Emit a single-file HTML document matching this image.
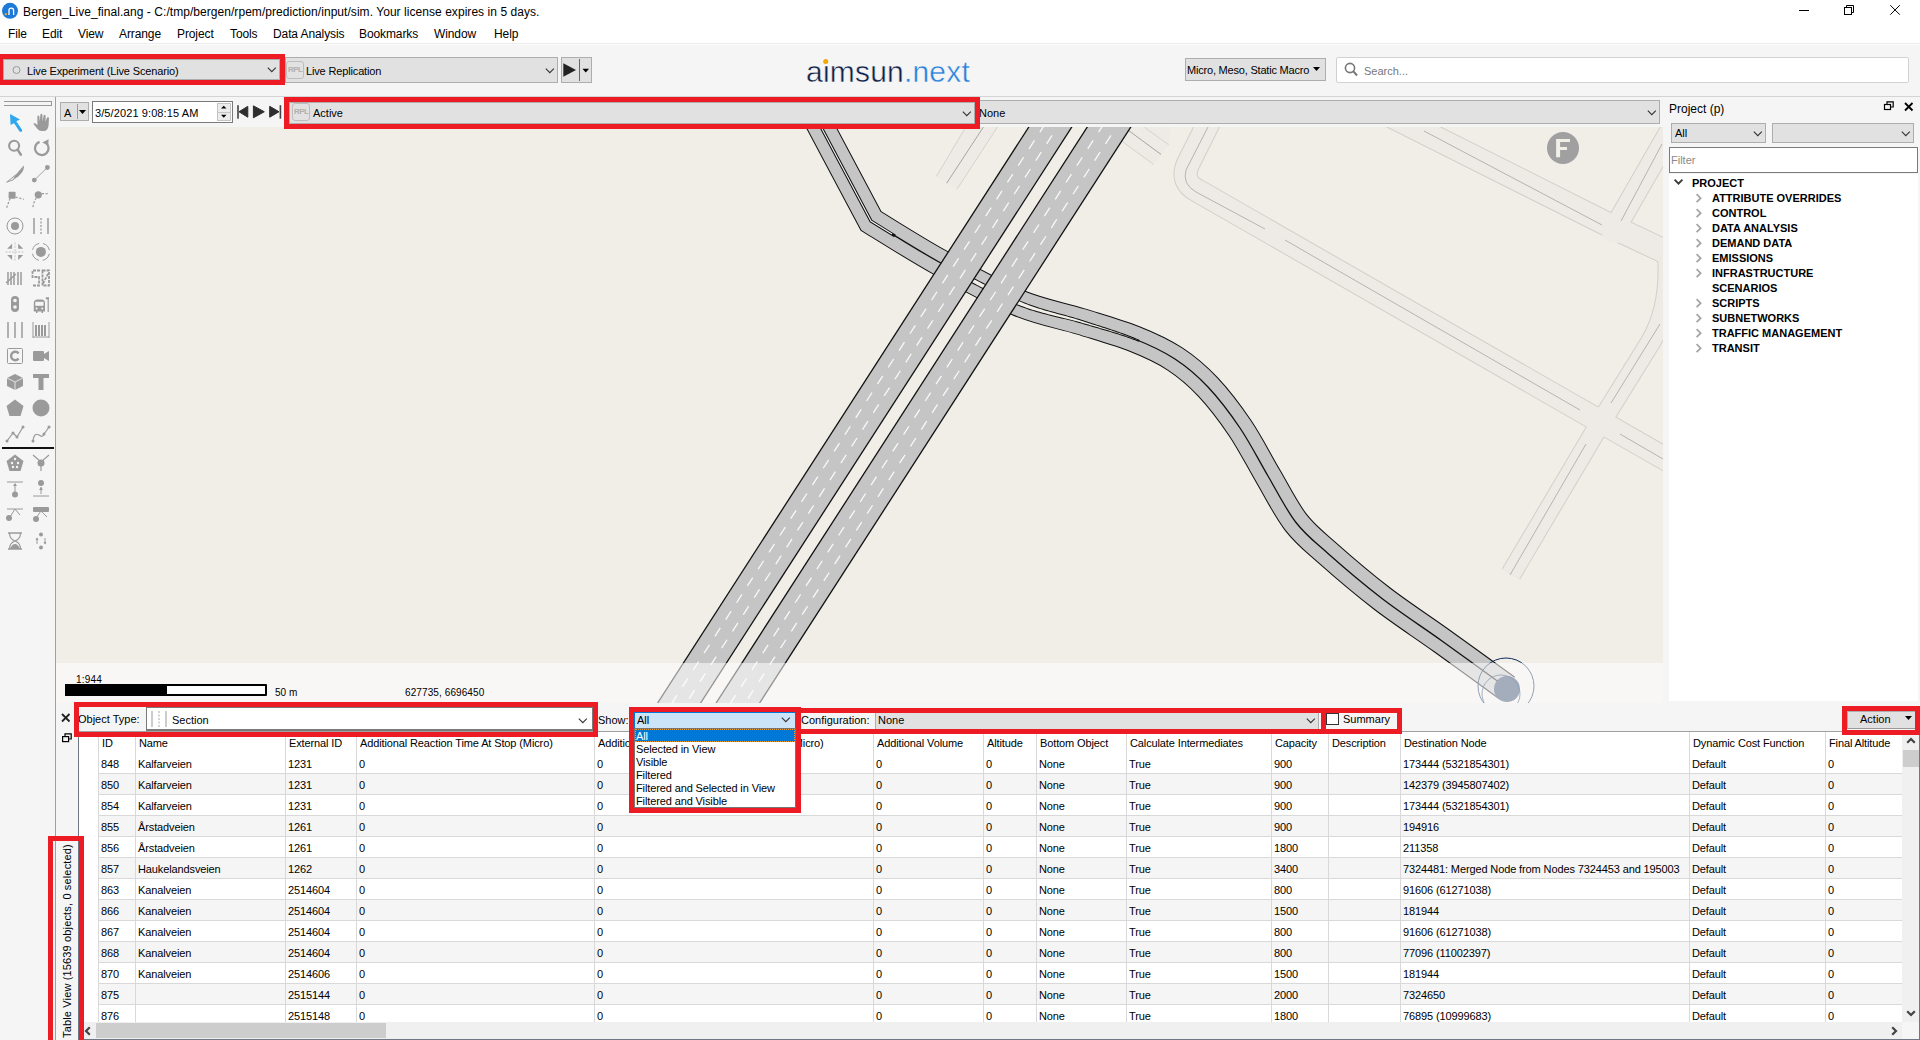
<!DOCTYPE html><html><head><meta charset="utf-8"><style>
html,body{margin:0;padding:0;width:1920px;height:1040px;overflow:hidden;background:#f5f5f5;font-family:"Liberation Sans",sans-serif;}
.t{position:absolute;white-space:nowrap;}
svg{overflow:visible}
</style></head><body>

<div style="position:absolute;left:0px;top:0px;width:1920px;height:43px;background:#ffffff;"></div>
<div style="position:absolute;left:0px;top:43px;width:1920px;height:1px;background:#ececec;"></div>
<svg style="position:absolute;left:1px;top:2px" width="18" height="18" viewBox="0 0 18 18"><circle cx="9" cy="8.8" r="8" fill="#1d7ad6"/><path d="M8,13 V8.2 Q8,6.2 10.2,6.2 Q12.6,6.2 12.6,8.4 V13" fill="none" stroke="#fff" stroke-width="1.3"/><rect x="3.8" y="11.2" width="2" height="1.9" fill="#f5b021"/></svg>
<div class="t" style="left:23px;top:5px;font-size:12px;line-height:14px;color:#000;letter-spacing:0.05px">Bergen_Live_final.ang - C:/tmp/bergen/rpem/prediction/input/sim. Your license expires in 5 days.</div>
<div style="position:absolute;left:1799px;top:10px;width:10px;height:1px;background:#000;"></div>
<svg style="position:absolute;left:1840px;top:0px" width="20" height="20" viewBox="1840 0 20 20"><rect x="1844.5" y="7.5" width="7" height="7" fill="none" stroke="#000" stroke-width="1"/><path d="M1846.5 7.5 V5.5 H1853.5 V12.5 H1851.5" fill="none" stroke="#000" stroke-width="1"/></svg>
<svg style="position:absolute;left:1880px;top:0px" width="30" height="20" viewBox="1880 0 30 20"><path d="M1890.3 5.2 L1899.8 14.7 M1899.8 5.2 L1890.3 14.7" stroke="#000" stroke-width="1"/></svg>
<div class="t" style="left:8px;top:27px;font-size:12px;line-height:14px;color:#000;letter-spacing:-0.1px">File</div>
<div class="t" style="left:42px;top:27px;font-size:12px;line-height:14px;color:#000;letter-spacing:-0.1px">Edit</div>
<div class="t" style="left:78px;top:27px;font-size:12px;line-height:14px;color:#000;letter-spacing:-0.1px">View</div>
<div class="t" style="left:119px;top:27px;font-size:12px;line-height:14px;color:#000;letter-spacing:-0.1px">Arrange</div>
<div class="t" style="left:177px;top:27px;font-size:12px;line-height:14px;color:#000;letter-spacing:-0.1px">Project</div>
<div class="t" style="left:230px;top:27px;font-size:12px;line-height:14px;color:#000;letter-spacing:-0.1px">Tools</div>
<div class="t" style="left:273px;top:27px;font-size:12px;line-height:14px;color:#000;letter-spacing:-0.1px">Data Analysis</div>
<div class="t" style="left:359px;top:27px;font-size:12px;line-height:14px;color:#000;letter-spacing:-0.1px">Bookmarks</div>
<div class="t" style="left:434px;top:27px;font-size:12px;line-height:14px;color:#000;letter-spacing:-0.1px">Window</div>
<div class="t" style="left:494px;top:27px;font-size:12px;line-height:14px;color:#000;letter-spacing:-0.1px">Help</div>
<div style="position:absolute;left:0px;top:44px;width:1920px;height:52px;background:#f5f5f5;"></div>
<div style="position:absolute;left:0px;top:44px;width:1920px;height:1px;background:#fcfcfc;"></div>
<div style="position:absolute;left:0px;top:96px;width:1920px;height:1px;background:#d4d4d4;"></div>
<div style="position:absolute;left:3px;top:59px;width:275px;height:19px;background:#e1e1e1;border:1px solid #adadad;"></div><svg style="position:absolute;left:267px;top:67px" width="10" height="6" viewBox="0 0 10 6"><path d="M0.8 0.6 L4.8 4.6 L8.8 0.6" fill="none" stroke="#333" stroke-width="1.1"/></svg>
<svg style="position:absolute;left:12px;top:65px" width="10" height="10"><circle cx="4.5" cy="5" r="3.5" fill="none" stroke="#999" stroke-width="1"/></svg>
<div class="t" style="left:27px;top:64px;font-size:11px;line-height:14px;color:#000;letter-spacing:-0.14px">Live Experiment (Live Scenario)</div>
<div style="position:absolute;left:-2px;top:54px;width:277px;height:21px;border:5px solid #ed1c24;z-index:50;"></div>
<div style="position:absolute;left:285px;top:57px;width:271px;height:24px;background:#e1e1e1;border:1px solid #adadad;"></div><svg style="position:absolute;left:545px;top:68px" width="10" height="6" viewBox="0 0 10 6"><path d="M0.8 0.6 L4.8 4.6 L8.8 0.6" fill="none" stroke="#333" stroke-width="1.1"/></svg>
<div style="position:absolute;left:286px;top:61px;width:18px;height:18px;border:1px solid #bdbdbd;border-radius:3px;background:#e2e2e2;box-sizing:border-box;"></div>
<div class="t" style="left:288px;top:65px;font-size:8px;line-height:10px;color:#b0b0b0;font-weight:bold;letter-spacing:-0.5px">RPL</div>
<div class="t" style="left:306px;top:64px;font-size:11px;line-height:14px;color:#000;letter-spacing:-0.15px">Live Replication</div>
<div style="position:absolute;left:561px;top:57px;width:29px;height:24px;background:#e1e1e1;border:1px solid #adadad;"></div>
<svg style="position:absolute;left:560px;top:56px" width="32" height="28" viewBox="560 56 32 28"><path d="M563.3 63.2 L576 70 L563.3 76.8 Z" fill="#222"/><rect x="579" y="59" width="1" height="22" fill="#666"/><path d="M582.5 68.8 L589 68.8 L585.75 72.5 Z" fill="#000"/></svg>
<div class="t" style="left:806px;top:54px;font-size:30px;line-height:36px;color:#0f2148;letter-spacing:0.2px;-webkit-text-stroke:0.45px #f5f5f5">aimsun<span style="color:#2680dc">.next</span></div>
<svg style="position:absolute;left:823px;top:59px" width="6" height="6"><circle cx="2.7" cy="2.6" r="2.5" fill="#f5a800"/></svg>
<div style="position:absolute;left:1185px;top:58px;width:141px;height:23px;background:#e1e1e1;border:1px solid #adadad;box-sizing:border-box;"></div>
<div class="t" style="left:1187px;top:63px;font-size:11px;line-height:14px;color:#000;letter-spacing:-0.2px">Micro, Meso, Static Macro</div>
<svg style="position:absolute;left:1313px;top:67px" width="8" height="5"><path d="M0 0 L7 0 L3.5 4 Z" fill="#000"/></svg>
<div style="position:absolute;left:1336px;top:57px;width:573px;height:26px;background:#fff;border:1px solid #d2d2d2;border-radius:2px;box-sizing:border-box;"></div>
<svg style="position:absolute;left:1344px;top:62px" width="16" height="16"><circle cx="6" cy="6" r="4.6" fill="none" stroke="#777" stroke-width="1.6"/><path d="M9.2 9.2 L13 13.5" stroke="#777" stroke-width="2"/></svg>
<div class="t" style="left:1364px;top:64px;font-size:11px;line-height:14px;color:#777;">Search...</div>
<div style="position:absolute;left:56px;top:97px;width:1608px;height:30px;background:#f5f5f5;"></div>
<div style="position:absolute;left:60px;top:102px;width:29px;height:19px;background:#e1e1e1;border:1px solid #adadad;box-sizing:border-box;"></div>
<div class="t" style="left:64px;top:106px;font-size:11px;line-height:14px;color:#000;">A</div>
<div style="position:absolute;left:77px;top:104px;width:1px;height:15px;background:#999;"></div>
<svg style="position:absolute;left:79px;top:110px" width="8" height="5"><path d="M0 0 L7 0 L3.5 4 Z" fill="#000"/></svg>
<div style="position:absolute;left:92px;top:101px;width:141px;height:22px;background:#fff;border:1px solid #7a7a7a;box-sizing:border-box;"></div>
<div class="t" style="left:95px;top:106px;font-size:11px;line-height:14px;color:#000;letter-spacing:0.1px">3/5/2021 9:08:15 AM</div>
<div style="position:absolute;left:217px;top:103px;width:14px;height:10px;background:#ececec;border:1px solid #c4c4c4;box-sizing:border-box;"></div>
<div style="position:absolute;left:217px;top:112px;width:14px;height:9px;background:#ececec;border:1px solid #c4c4c4;box-sizing:border-box;"></div>
<svg style="position:absolute;left:210px;top:98px" width="30" height="30" viewBox="210 98 30 30"><path d="M221 108.6 L223.75 105.8 L226.5 108.6 Z" fill="#000"/><path d="M221 114.8 L226.5 114.8 L223.75 117.8 Z" fill="#000"/></svg>
<svg style="position:absolute;left:230px;top:98px" width="60" height="30" viewBox="230 98 60 30"><g fill="#2e2e2e" stroke="#2e2e2e" stroke-width="1" stroke-linejoin="round"><rect x="237.2" y="105.2" width="1.6" height="13.5" stroke="none" fill="#444"/><path d="M239 111.75 L247.8 106.3 L247.8 117.2 Z"/><path d="M253.4 105.8 L264.3 111.75 L253.4 117.8 Z"/><path d="M269.7 106.3 L279 111.75 L269.7 117.2 Z"/></g><rect x="279.6" y="105.2" width="1.6" height="13.5" fill="#444"/></svg>
<div style="position:absolute;left:289px;top:102px;width:684px;height:20px;background:#e1e1e1;border:1px solid #adadad;"></div><svg style="position:absolute;left:962px;top:111px" width="10" height="6" viewBox="0 0 10 6"><path d="M0.8 0.6 L4.8 4.6 L8.8 0.6" fill="none" stroke="#333" stroke-width="1.1"/></svg>
<div style="position:absolute;left:292px;top:103px;width:18px;height:18px;border:1px solid #bdbdbd;border-radius:3px;background:#e2e2e2;box-sizing:border-box;"></div>
<div class="t" style="left:294px;top:107px;font-size:8px;line-height:10px;color:#b0b0b0;font-weight:bold;letter-spacing:-0.5px">RPL</div>
<div class="t" style="left:313px;top:106px;font-size:11px;line-height:14px;color:#000;">Active</div>
<div style="position:absolute;left:284px;top:97px;width:686px;height:22px;border:5px solid #ed1c24;z-index:50;"></div>
<div style="position:absolute;left:976px;top:100px;width:682px;height:22px;background:#e1e1e1;border:1px solid #adadad;"></div><svg style="position:absolute;left:1647px;top:110px" width="10" height="6" viewBox="0 0 10 6"><path d="M0.8 0.6 L4.8 4.6 L8.8 0.6" fill="none" stroke="#333" stroke-width="1.1"/></svg>
<div class="t" style="left:979px;top:106px;font-size:11px;line-height:14px;color:#000;">None</div>
<div style="position:absolute;left:0px;top:97px;width:55px;height:943px;background:#f5f5f5;"></div>
<div style="position:absolute;left:55px;top:97px;width:1px;height:943px;background:#a0a0a0;"></div>
<div style="position:absolute;left:4px;top:101px;width:48px;height:1px;background:#999;"></div>
<div style="position:absolute;left:4px;top:105px;width:48px;height:1px;background:#999;"></div>
<div style="position:absolute;left:51px;top:101px;width:1px;height:5px;background:#999;"></div>
<div style="position:absolute;left:2px;top:447px;width:52px;height:2px;background:#111;"></div>
<svg style="position:absolute;left:5px;top:113px" width="20" height="20" viewBox="0 0 20 20"><path d="M5,1 L15,6.5 L11.2,8.3 L16.8,16.8 L14.6,18.4 L9.2,10 L5.6,12 Z" fill="#2fa8f0"/><path d="M9.5,8.5 L15.8,17.6" stroke="#2fa8f0" stroke-width="2.6" stroke-linecap="round"/></svg>
<svg style="position:absolute;left:31px;top:112px" width="20" height="20" viewBox="0 0 20 20"><path d="M2.3,11.8 Q3.2,10.6 4.6,11.6 L6.4,13.2 L6.4,4.2 Q7.3,2.8 8.3,4.2 L8.8,9.4 L9.4,2.6 Q10.4,1 11.4,2.6 L11.6,9.2 L12.7,3.2 Q13.7,2 14.6,3.4 L14.5,9.6 L16.1,5.6 Q17.2,4.6 18,5.8 L17.6,13.5 Q16.8,19 12.6,19 L10.5,19 Q8,19 6.5,17 Z" fill="#9a9a9a"/></svg>
<svg style="position:absolute;left:5px;top:138px" width="20" height="20" viewBox="0 0 20 20"><circle cx="9.1" cy="7.8" r="5" fill="none" stroke="#9a9a9a" stroke-width="2.1"/><path d="M12.6,11.6 L15.8,16.6" stroke="#9a9a9a" stroke-width="2.6" stroke-linecap="round"/></svg>
<svg style="position:absolute;left:31px;top:138px" width="20" height="20" viewBox="0 0 20 20"><path d="M14.6,4.6 A6.8,6.8 0 1 1 8.6,3.8" fill="none" stroke="#9a9a9a" stroke-width="2.3"/><path d="M17.6,1.2 L17.2,7.6 L11.2,4.6 Z" fill="#9a9a9a"/></svg>
<svg style="position:absolute;left:5px;top:164px" width="20" height="20" viewBox="0 0 20 20"><path d="M18.7,1.5 Q20,6.5 13.5,12.3 L8.5,15.8 L10.5,11 Z" fill="#9a9a9a"/><path d="M10.5,11 L1.6,18.2 L8.5,15.8 Z" fill="#e6e6e6" stroke="#9a9a9a" stroke-width="0.9"/></svg>
<svg style="position:absolute;left:31px;top:164px" width="20" height="20" viewBox="0 0 20 20"><circle cx="3.3" cy="16.1" r="2.4" fill="#9a9a9a"/><circle cx="16.4" cy="3.5" r="2.4" fill="#9a9a9a"/><path d="M3.3,16.1 L16.4,3.5" stroke="#9a9a9a" stroke-width="0.9"/></svg>
<svg style="position:absolute;left:5px;top:190px" width="20" height="20" viewBox="0 0 20 20"><rect x="3.6" y="1.7" width="7" height="7" rx="1" fill="#9a9a9a"/><path d="M10.6,7 L18.7,9.3 M5,8.5 L1.6,17.9" stroke="#9a9a9a" stroke-width="1.2" stroke-dasharray="2.2 1.6"/></svg>
<svg style="position:absolute;left:31px;top:190px" width="20" height="20" viewBox="0 0 20 20"><circle cx="7.3" cy="4.8" r="3.6" fill="#9a9a9a"/><path d="M10.8,3.6 L18.4,3.8 M5.3,8 Q2.5,12 1.8,17.9" fill="none" stroke="#9a9a9a" stroke-width="1.2" stroke-dasharray="2.2 1.6"/></svg>
<svg style="position:absolute;left:5px;top:216px" width="20" height="20" viewBox="0 0 20 20"><circle cx="10" cy="10" r="8" fill="none" stroke="#9a9a9a" stroke-width="1"/><circle cx="10" cy="10" r="4" fill="#9a9a9a"/></svg>
<svg style="position:absolute;left:31px;top:216px" width="20" height="20" viewBox="0 0 20 20"><path d="M3 2 V18 M17 2 V18" stroke="#9a9a9a" stroke-width="1.5"/><path d="M10 2 V18" stroke="#9a9a9a" stroke-width="1.3" stroke-dasharray="2 1.5"/></svg>
<svg style="position:absolute;left:5px;top:242px" width="20" height="20" viewBox="0 0 20 20"><path d="M7.1,1.8 V6.8 H2.1 Z M13.2,1.8 L18.2,6.8 H13.2 Z M2.1,12.9 H7.1 V17.9 Z M13.2,12.9 H18.2 L13.2,17.9 Z" fill="#9a9a9a"/><path d="M10,0.5 V19.5 M0.5,10 H19.5" stroke="#d4d4d4" stroke-width="1.4" stroke-dasharray="2 1.2"/></svg>
<svg style="position:absolute;left:31px;top:242px" width="20" height="20" viewBox="0 0 20 20"><circle cx="9.9" cy="9.9" r="5" fill="#9a9a9a"/><circle cx="9.9" cy="9.9" r="8.6" fill="none" stroke="#9a9a9a" stroke-width="1" stroke-dasharray="9.5 4" stroke-dashoffset="-2"/></svg>
<svg style="position:absolute;left:5px;top:268px" width="20" height="20" viewBox="0 0 20 20"><path d="M3 4 V17 M6 4 V17 M9 4 V17 M13 4 V17 M16 4 V17" stroke="#9a9a9a" stroke-width="1.5"/><path d="M1 15 L11 6" stroke="#9a9a9a" stroke-width="1.3"/></svg>
<svg style="position:absolute;left:31px;top:268px" width="20" height="20" viewBox="0 0 20 20"><path d="M9,2.5 H1.5 V9 H8 V17.5 H1.5 M11.5,2.5 H18 V17.5 H11.5 Z M12,15.5 L17.5,5" fill="none" stroke="#9a9a9a" stroke-width="1.8" stroke-dasharray="3 1"/></svg>
<svg style="position:absolute;left:5px;top:294px" width="20" height="20" viewBox="0 0 20 20"><rect x="6" y="2" width="8" height="16" rx="4" fill="#9a9a9a"/><circle cx="10" cy="6.5" r="1.8" fill="#f5f5f5"/><circle cx="10" cy="13" r="1.8" fill="#f5f5f5"/></svg>
<svg style="position:absolute;left:31px;top:294px" width="20" height="20" viewBox="0 0 20 20"><path d="M2.8,9.2 Q2.8,5.5 6.5,5.5 H10.5 Q14,5.5 14,9.2 V17.5 H12 V19 H10.5 V17.5 H6.5 V19 H5 V17.5 H2.8 Z" fill="#9a9a9a"/><rect x="4.3" y="7.8" width="8.2" height="4" fill="#f5f5f5"/><circle cx="5.6" cy="14.6" r="1" fill="#f5f5f5"/><circle cx="11.2" cy="14.6" r="1" fill="#f5f5f5"/><rect x="14.8" y="3.3" width="2.8" height="2" fill="#9a9a9a"/><rect x="16.6" y="3.3" width="1.2" height="14.8" fill="#9a9a9a"/></svg>
<svg style="position:absolute;left:5px;top:320px" width="20" height="20" viewBox="0 0 20 20"><path d="M3 2 V18 M10 2 V18 M17 2 V18" stroke="#9a9a9a" stroke-width="1.5"/></svg>
<svg style="position:absolute;left:31px;top:320px" width="20" height="20" viewBox="0 0 20 20"><path d="M2 2 V18 M18 2 V18" stroke="#9a9a9a" stroke-width="1"/><path d="M5 5 V16 M8 5 V16 M11 5 V16 M14 5 V16" stroke="#9a9a9a" stroke-width="2"/><path d="M2 17 H18" stroke="#9a9a9a" stroke-width="1"/></svg>
<svg style="position:absolute;left:5px;top:346px" width="20" height="20" viewBox="0 0 20 20"><rect x="2.5" y="2.5" width="15" height="15" rx="1" fill="none" stroke="#9a9a9a" stroke-width="1"/><path d="M13.6,7.4 A4.2,4.2 0 1 0 13.6,12.6" fill="none" stroke="#9a9a9a" stroke-width="2.4"/></svg>
<svg style="position:absolute;left:31px;top:346px" width="20" height="20" viewBox="0 0 20 20"><rect x="2" y="5" width="11" height="10" rx="1" fill="#9a9a9a"/><path d="M13 8 L18 5 V15 L13 12 Z" fill="#9a9a9a"/></svg>
<svg style="position:absolute;left:5px;top:372px" width="20" height="20" viewBox="0 0 20 20"><path d="M10 2 L18 6 V14 L10 18 L2 14 V6 Z" fill="#9a9a9a"/><path d="M2 6 L10 10 L18 6 M10 10 V18" stroke="#f5f5f5" stroke-width="0.8" fill="none"/></svg>
<svg style="position:absolute;left:31px;top:372px" width="20" height="20" viewBox="0 0 20 20"><path d="M2 2 H18 V6 H12.5 V18 H7.5 V6 H2 Z" fill="#9a9a9a"/></svg>
<svg style="position:absolute;left:5px;top:398px" width="20" height="20" viewBox="0 0 20 20"><path d="M10 1.5 L18.5 8 L15.5 18 H4.5 L1.5 8 Z" fill="#9a9a9a"/></svg>
<svg style="position:absolute;left:31px;top:398px" width="20" height="20" viewBox="0 0 20 20"><circle cx="10" cy="10" r="8.5" fill="#9a9a9a"/></svg>
<svg style="position:absolute;left:5px;top:424px" width="20" height="20" viewBox="0 0 20 20"><path d="M2 17 L8 9 L12 13 L18 3" fill="none" stroke="#9a9a9a" stroke-width="1.2"/><circle cx="2" cy="17" r="1.5" fill="#9a9a9a"/><circle cx="8" cy="9" r="1.5" fill="#9a9a9a"/><circle cx="12" cy="13" r="1.5" fill="#9a9a9a"/><circle cx="18" cy="3" r="1.5" fill="#9a9a9a"/></svg>
<svg style="position:absolute;left:31px;top:424px" width="20" height="20" viewBox="0 0 20 20"><path d="M2 17 Q3 8 8 11 Q12 14 13 10 Q16 6 18 3" fill="none" stroke="#9a9a9a" stroke-width="1.2"/><circle cx="2" cy="17" r="1.5" fill="#9a9a9a"/><circle cx="13" cy="10" r="1.5" fill="#9a9a9a"/><circle cx="18" cy="3" r="1.5" fill="#9a9a9a"/></svg>
<svg style="position:absolute;left:5px;top:453px" width="20" height="20" viewBox="0 0 20 20"><path d="M10 1.5 L18.5 8 L15.5 18 H4.5 L1.5 8 Z" fill="#9a9a9a"/><circle cx="10" cy="6" r="1.2" fill="#f5f5f5"/><circle cx="7" cy="10" r="1.2" fill="#f5f5f5"/><circle cx="13" cy="10" r="1.2" fill="#f5f5f5"/><circle cx="8" cy="14" r="1.2" fill="#f5f5f5"/><circle cx="12" cy="14" r="1.2" fill="#f5f5f5"/></svg>
<svg style="position:absolute;left:31px;top:453px" width="20" height="20" viewBox="0 0 20 20"><path d="M2 2 L10 9 L18 2 M10 9 V18" stroke="#9a9a9a" stroke-width="1.2" fill="none"/><circle cx="10" cy="10" r="3.5" fill="#9a9a9a"/></svg>
<svg style="position:absolute;left:5px;top:479px" width="20" height="20" viewBox="0 0 20 20"><path d="M2 3 H18" stroke="#9a9a9a" stroke-width="1"/><path d="M10 13 V5" stroke="#9a9a9a" stroke-width="1"/><path d="M8 7 L10 4 L12 7 Z" fill="#9a9a9a"/><circle cx="10" cy="15.5" r="3" fill="#9a9a9a"/></svg>
<svg style="position:absolute;left:31px;top:479px" width="20" height="20" viewBox="0 0 20 20"><path d="M2 17 H18" stroke="#9a9a9a" stroke-width="1"/><path d="M10 15 V8" stroke="#9a9a9a" stroke-width="1"/><path d="M8 11 L10 8 L12 11 Z" fill="#9a9a9a"/><circle cx="10" cy="4" r="3" fill="#9a9a9a"/></svg>
<svg style="position:absolute;left:5px;top:505px" width="20" height="20" viewBox="0 0 20 20"><path d="M2 4 H18" stroke="#9a9a9a" stroke-width="1"/><path d="M5 12 L10 4 L15 10" stroke="#9a9a9a" stroke-width="1" fill="none"/><circle cx="4" cy="13" r="3" fill="#9a9a9a"/></svg>
<svg style="position:absolute;left:31px;top:505px" width="20" height="20" viewBox="0 0 20 20"><rect x="2" y="2" width="16" height="5" rx="1" fill="#9a9a9a"/><path d="M5 13 L10 6 L16 12" stroke="#9a9a9a" stroke-width="1" fill="none"/><circle cx="5" cy="14" r="3" fill="#9a9a9a"/></svg>
<svg style="position:absolute;left:5px;top:531px" width="20" height="20" viewBox="0 0 20 20"><path d="M3 2 H17 M3 18 H17" stroke="#9a9a9a" stroke-width="1.5"/><path d="M4.5 2 Q4.5 8 10 10 Q15.5 8 15.5 2 M4.5 18 Q4.5 12 10 10 Q15.5 12 15.5 18" stroke="#9a9a9a" stroke-width="1.2" fill="none"/><path d="M5 18 Q7 13 10 13 Q13 13 15 18 Z" fill="#9a9a9a"/></svg>
<svg style="position:absolute;left:31px;top:531px" width="20" height="20" viewBox="0 0 20 20"><circle cx="10" cy="3.5" r="2" fill="#9a9a9a"/><circle cx="10" cy="16.5" r="2" fill="#9a9a9a"/><path d="M6 7 V13 M14 7 V13" stroke="#9a9a9a" stroke-width="1"/><path d="M4.5 9 L6 6.5 L7.5 9 Z M12.5 11 L14 13.5 L15.5 11 Z" fill="#9a9a9a"/></svg>
<svg style="position:absolute;left:56px;top:127px" width="1607" height="576" viewBox="56 127 1607 576"><defs><clipPath id="mc"><rect x="56" y="127" width="1607" height="576"/></clipPath></defs><g clip-path="url(#mc)"><rect x="56" y="127" width="1607" height="576" fill="#f1eee8"/><path d="M1214,112 L1188,164 Q1180,182 1198,191 L1601,422 L1720,490" fill="none" stroke="#d2cfc9" stroke-width="24.2" stroke-linejoin="round"/><path d="M1370,105 L1615,228 L1700,268" fill="none" stroke="#d2cfc9" stroke-width="25.2" stroke-linejoin="round"/><path d="M1700,80 L1615,228" fill="none" stroke="#d2cfc9" stroke-width="23.2" stroke-linejoin="round"/><path d="M1601,422 L1650,343 Q1670,310 1668,262 L1668,240" fill="none" stroke="#d2cfc9" stroke-width="21.2" stroke-linejoin="round"/><path d="M1601,422 L1511,574" fill="none" stroke="#d2cfc9" stroke-width="21.2" stroke-linejoin="round"/><path d="M1214,112 L1188,164 Q1180,182 1198,191 L1601,422 L1720,490" fill="none" stroke="#eeebe6" stroke-width="22.2" stroke-linejoin="round"/><path d="M1370,105 L1615,228 L1700,268" fill="none" stroke="#eeebe6" stroke-width="23.2" stroke-linejoin="round"/><path d="M1700,80 L1615,228" fill="none" stroke="#eeebe6" stroke-width="21.2" stroke-linejoin="round"/><path d="M1601,422 L1650,343 Q1670,310 1668,262 L1668,240" fill="none" stroke="#eeebe6" stroke-width="19.2" stroke-linejoin="round"/><path d="M1601,422 L1511,574" fill="none" stroke="#eeebe6" stroke-width="19.2" stroke-linejoin="round"/><circle cx="1601" cy="422" r="15" fill="#eeebe6"/><circle cx="1615" cy="229" r="14" fill="#eeebe6"/><polygon points="1139,120 1172,120 1168.7,144.8 1153.75,164.5 1122,141.4 1130,120" fill="#eeebe6"/><line x1="1144.4" y1="127.2" x2="1168.7" y2="144.8" stroke="#d2cfc9" stroke-width="0.9"/><line x1="1128.3" y1="130.3" x2="1161" y2="154.4" stroke="#a8a5a0" stroke-width="1.0"/><line x1="1122" y1="141.4" x2="1153.75" y2="164.5" stroke="#d2cfc9" stroke-width="0.9"/><polygon points="970,120 1002,120 957,189.25 936.3,176.3" fill="#eeebe6"/><line x1="970" y1="120" x2="936.3" y2="176.3" stroke="#d2cfc9" stroke-width="0.9"/><line x1="988" y1="120" x2="946.7" y2="183.2" stroke="#a8a5a0" stroke-width="1.0"/><line x1="1002" y1="120" x2="957" y2="189.25" stroke="#d2cfc9" stroke-width="0.9"/><path d="M1208,127 L1186,170 Q1182,184 1196,192 L1265,229" fill="none" stroke="#a8a5a0" stroke-width="0.8"/><path d="M1285,240 L1580,410" fill="none" stroke="#a8a5a0" stroke-width="0.8"/><path d="M1620,434 L1663,459" fill="none" stroke="#a8a5a0" stroke-width="0.8"/><path d="M1424,131 L1602,225" fill="none" stroke="#a8a5a0" stroke-width="0.8"/><path d="M1662,144 L1621,221" fill="none" stroke="#a8a5a0" stroke-width="0.8"/><path d="M1611,403 L1660,324" fill="none" stroke="#a8a5a0" stroke-width="0.8"/><path d="M1586,444 L1510,575" fill="none" stroke="#a8a5a0" stroke-width="0.8"/><path d="M812,110 C821.8,128.5 861.2,202.5 871,221 C882.3,227.8 914.6,248.4 939,262 C963.4,275.6 993.9,292.6 1017.5,302.5 C1041.1,312.4 1061.3,315.4 1080.8,321.5 C1100.3,327.6 1118.9,332.8 1134.6,339 C1150.3,345.2 1162.8,351.0 1175,359 C1187.2,367.0 1197.2,375.5 1208,387 C1218.8,398.5 1230.0,413.2 1240,428 C1250.0,442.8 1258.7,460.2 1268,476 C1277.3,491.8 1286.0,509.6 1296,522.5 C1306.0,535.4 1313.7,540.8 1328,553.5 C1342.3,566.2 1363.0,583.9 1382,598.5 C1401.0,613.1 1421.2,626.1 1442,641 C1462.8,655.9 1496.2,680.2 1507,688" fill="none" stroke="#111" stroke-width="27.5" stroke-linejoin="miter"/><path d="M812,110 C821.8,128.5 861.2,202.5 871,221 C882.3,227.8 914.6,248.4 939,262 C963.4,275.6 993.9,292.6 1017.5,302.5 C1041.1,312.4 1061.3,315.4 1080.8,321.5 C1100.3,327.6 1118.9,332.8 1134.6,339 C1150.3,345.2 1162.8,351.0 1175,359 C1187.2,367.0 1197.2,375.5 1208,387 C1218.8,398.5 1230.0,413.2 1240,428 C1250.0,442.8 1258.7,460.2 1268,476 C1277.3,491.8 1286.0,509.6 1296,522.5 C1306.0,535.4 1313.7,540.8 1328,553.5 C1342.3,566.2 1363.0,583.9 1382,598.5 C1401.0,613.1 1421.2,626.1 1442,641 C1462.8,655.9 1496.2,680.2 1507,688" fill="none" stroke="#c5c5c5" stroke-width="25.5" stroke-linejoin="miter"/><path d="M812,110 C821.8,128.5 861.2,202.5 871,221 C882.3,227.8 914.6,248.4 939,262 C963.4,275.6 993.9,292.6 1017.5,302.5 C1041.1,312.4 1061.3,315.4 1080.8,321.5 C1100.3,327.6 1118.9,332.8 1134.6,339 C1150.3,345.2 1162.8,351.0 1175,359 C1187.2,367.0 1197.2,375.5 1208,387 C1218.8,398.5 1230.0,413.2 1240,428 C1250.0,442.8 1258.7,460.2 1268,476 C1277.3,491.8 1286.0,509.6 1296,522.5 C1306.0,535.4 1313.7,540.8 1328,553.5 C1342.3,566.2 1363.0,583.9 1382,598.5 C1401.0,613.1 1421.2,626.1 1442,641 C1462.8,655.9 1496.2,680.2 1507,688" fill="none" stroke="#111" stroke-width="1.3" stroke-linejoin="miter"/><path d="M812,110 L871,221 L895,236" fill="none" stroke="#111" stroke-width="3.2" stroke-linejoin="miter"/><path d="M812,110 L871,221 L892,234" fill="none" stroke="#f2f2f2" stroke-width="1.1" stroke-linejoin="miter"/><polygon points="955.57,274.39 958.23,275.85 960.91,277.32 963.61,278.79 966.33,280.26 969.05,281.73 971.77,283.20 974.50,284.65 977.24,286.10 979.97,287.54 982.69,288.96 985.41,290.36 988.12,291.75 990.81,293.11 993.49,294.45 996.15,295.77 998.79,297.05 1001.40,298.31 1003.99,299.53 1006.54,300.72 1009.07,301.87 1011.56,302.99 1014.01,304.05 1016.43,305.05 1018.83,306.00 1021.20,306.91 1023.55,307.77 1025.88,308.59 1028.18,309.38 1030.46,310.13 1032.72,310.85 1034.96,311.53 1037.18,312.19 1039.38,312.82 1041.56,313.43 1043.73,314.01 1045.87,314.57 1048.00,315.12 1050.11,315.65 1052.21,316.17 1054.29,316.67 1056.35,317.17 1058.40,317.66 1060.44,318.15 1062.47,318.63 1064.48,319.12 1066.48,319.60 1068.47,320.10 1070.46,320.59 1072.43,321.10 1074.40,321.62 1076.35,322.15 1078.30,322.70 1080.25,323.27 1082.21,323.85 1084.16,324.42 1086.11,324.99 1088.04,325.55 1089.97,326.11 1091.89,326.67 1093.80,327.22 1095.70,327.77 1097.59,328.32 1099.47,328.86 1101.34,329.40 1103.20,329.94 1105.05,330.48 1106.88,331.03 1108.70,331.57 1110.51,332.11 1112.30,332.65 1114.08,333.19 1115.85,333.74 1117.60,334.29 1119.33,334.84 1121.05,335.39 1122.76,335.95 1124.45,336.51 1126.12,337.08 1127.77,337.65 1129.41,338.23 1131.02,338.81 1132.62,339.40 1134.20,340.00 1135.77,340.60 1137.31,341.20 1138.83,341.80 1139.60,339.93 1138.09,339.29 1136.55,338.64 1135.00,338.00 1133.42,337.35 1131.82,336.71 1130.21,336.08 1128.57,335.45 1126.92,334.83 1125.25,334.21 1123.57,333.60 1121.87,332.99 1120.15,332.39 1118.42,331.79 1116.68,331.19 1114.92,330.59 1113.15,330.00 1111.36,329.40 1109.56,328.81 1107.75,328.22 1105.93,327.62 1104.09,327.03 1102.25,326.44 1100.39,325.84 1098.53,325.25 1096.65,324.65 1094.77,324.05 1092.87,323.44 1090.97,322.84 1089.06,322.22 1087.14,321.61 1085.22,320.99 1083.29,320.36 1081.35,319.73 1079.39,319.10 1077.42,318.49 1075.45,317.89 1073.48,317.31 1071.49,316.74 1069.51,316.18 1067.51,315.63 1065.52,315.09 1063.51,314.54 1061.49,314.00 1059.47,313.46 1057.44,312.91 1055.39,312.36 1053.34,311.80 1051.28,311.23 1049.20,310.64 1047.11,310.05 1045.01,309.43 1042.90,308.80 1040.77,308.14 1038.63,307.47 1036.47,306.76 1034.30,306.03 1032.11,305.27 1029.90,304.48 1027.67,303.65 1025.43,302.78 1023.16,301.88 1020.88,300.94 1018.57,299.95 1016.22,298.92 1013.82,297.86 1011.37,296.77 1008.88,295.64 1006.36,294.47 1003.81,293.26 1001.23,292.01 998.62,290.74 995.98,289.44 993.33,288.11 990.66,286.76 987.97,285.38 985.27,283.99 982.56,282.58 979.85,281.15 977.13,279.71 974.42,278.26 971.70,276.80 968.99,275.34 966.29,273.87 963.60,272.41 960.92,270.94 958.26,269.48" fill="#111"/><polygon points="956.05,273.51 958.71,274.97 961.39,276.44 964.09,277.91 966.80,279.39 969.52,280.85 972.25,282.32 974.97,283.77 977.70,285.22 980.43,286.65 983.15,288.07 985.87,289.47 988.57,290.86 991.26,292.22 993.93,293.56 996.59,294.87 999.22,296.15 1001.83,297.41 1004.41,298.63 1006.96,299.82 1009.48,300.96 1011.96,302.07 1014.40,303.14 1016.82,304.13 1019.20,305.07 1021.56,305.97 1023.90,306.83 1026.22,307.65 1028.51,308.44 1030.78,309.18 1033.03,309.90 1035.27,310.58 1037.48,311.23 1039.67,311.86 1041.84,312.46 1044.00,313.05 1046.14,313.61 1048.26,314.15 1050.37,314.68 1052.46,315.20 1054.53,315.70 1056.60,316.20 1058.65,316.69 1060.69,317.18 1062.71,317.66 1064.73,318.15 1066.73,318.64 1068.73,319.13 1070.72,319.63 1072.70,320.14 1074.67,320.66 1076.63,321.19 1078.59,321.74 1080.55,322.31 1082.50,322.89 1084.46,323.47 1086.40,324.03 1088.34,324.60 1090.26,325.16 1092.18,325.71 1094.09,326.26 1095.99,326.81 1097.88,327.36 1099.77,327.90 1101.63,328.45 1103.49,328.99 1105.34,329.53 1107.18,330.07 1109.00,330.61 1110.81,331.15 1112.61,331.70 1114.39,332.24 1116.16,332.79 1117.91,333.34 1119.65,333.89 1121.38,334.45 1123.08,335.01 1124.78,335.57 1126.45,336.14 1128.11,336.71 1129.75,337.29 1131.38,337.88 1132.98,338.47 1134.57,339.07 1136.14,339.67 1137.69,340.27 1139.21,340.87 1139.22,340.85 1137.71,340.21 1136.18,339.57 1134.63,338.93 1133.06,338.28 1131.47,337.65 1129.86,337.02 1128.23,336.39 1126.58,335.77 1124.92,335.16 1123.24,334.55 1121.55,333.94 1119.84,333.34 1118.11,332.74 1116.37,332.14 1114.61,331.54 1112.84,330.95 1111.06,330.36 1109.26,329.76 1107.46,329.17 1105.63,328.58 1103.80,327.99 1101.96,327.39 1100.10,326.80 1098.24,326.20 1096.36,325.61 1094.48,325.00 1092.58,324.40 1090.68,323.79 1088.77,323.18 1086.85,322.56 1084.92,321.94 1082.99,321.32 1081.05,320.69 1079.10,320.06 1077.14,319.45 1075.18,318.86 1073.21,318.28 1071.23,317.71 1069.25,317.15 1067.26,316.60 1065.27,316.06 1063.26,315.51 1061.25,314.97 1059.22,314.43 1057.19,313.88 1055.14,313.33 1053.09,312.77 1051.02,312.19 1048.94,311.61 1046.85,311.01 1044.74,310.39 1042.62,309.76 1040.49,309.10 1038.34,308.42 1036.17,307.72 1033.99,306.98 1031.79,306.22 1029.57,305.42 1027.33,304.59 1025.07,303.72 1022.80,302.81 1020.50,301.87 1018.18,300.87 1015.83,299.83 1013.41,298.78 1010.96,297.68 1008.47,296.55 1005.94,295.37 1003.38,294.16 1000.79,292.91 998.18,291.64 995.54,290.33 992.88,289.00 990.20,287.65 987.51,286.27 984.81,284.87 982.10,283.46 979.38,282.03 976.66,280.59 973.94,279.14 971.23,277.68 968.52,276.22 965.81,274.75 963.12,273.28 960.44,271.82 957.78,270.36" fill="#f1eee8"/><polygon points="1052.64,90 1095.64,90 676.78,740 633.78,740" fill="#c5c5c5"/><line x1="1052.64" y1="90" x2="633.78" y2="740" stroke="#111" stroke-width="1.3"/><line x1="1095.64" y1="90" x2="676.78" y2="740" stroke="#111" stroke-width="1.3"/><line x1="1066.98" y1="90" x2="648.12" y2="740" stroke="#f8f8f8" stroke-width="1.3" stroke-dasharray="10 10" stroke-dashoffset="0"/><line x1="1081.31" y1="90" x2="662.45" y2="740" stroke="#f8f8f8" stroke-width="1.3" stroke-dasharray="10 10" stroke-dashoffset="6"/><polygon points="1111.14,90 1154.64,90 735.78,740 692.28,740" fill="#c5c5c5"/><line x1="1111.14" y1="90" x2="692.28" y2="740" stroke="#111" stroke-width="1.3"/><line x1="1154.64" y1="90" x2="735.78" y2="740" stroke="#111" stroke-width="1.3"/><line x1="1125.64" y1="90" x2="706.78" y2="740" stroke="#f8f8f8" stroke-width="1.3" stroke-dasharray="10 10" stroke-dashoffset="0"/><line x1="1140.14" y1="90" x2="721.28" y2="740" stroke="#f8f8f8" stroke-width="1.3" stroke-dasharray="10 10" stroke-dashoffset="6"/><circle cx="1563" cy="148" r="16" fill="#a0a0a0"/><path d="M1556.1,139 H1570 V142.1 H1560.1 V147 H1567 V150.1 H1560.1 V157.2 H1556.1 Z" fill="#f2efe9"/><circle cx="1507" cy="689" r="13" fill="#34496c"/><circle cx="1506" cy="686" r="28" fill="none" stroke="#0d2b5a" stroke-width="1"/><circle cx="1501" cy="694" r="19" fill="none" stroke="#0d2b5a" stroke-width="0.8"/><rect x="56" y="663" width="1607" height="40" fill="#ffffff" fill-opacity="0.55"/></g></svg>
<div class="t" style="left:76px;top:674px;font-size:10px;line-height:12px;color:#000;letter-spacing:0.2px">1:944</div>
<div style="position:absolute;left:65px;top:684px;width:202px;height:12px;background:#fff;border:2px solid #000;box-sizing:border-box;border-radius:1px;"></div>
<div style="position:absolute;left:65px;top:684px;width:102px;height:12px;background:#000;"></div>
<div class="t" style="left:275px;top:687px;font-size:10px;line-height:12px;color:#000;">50 m</div>
<div class="t" style="left:405px;top:687px;font-size:10px;line-height:12px;color:#000;letter-spacing:0.1px">627735, 6696450</div>
<div style="position:absolute;left:1663px;top:97px;width:257px;height:606px;background:#f5f5f5;"></div>
<div class="t" style="left:1669px;top:102px;font-size:12px;line-height:14px;color:#000;">Project (p)</div>
<svg style="position:absolute;left:1884px;top:101px" width="10" height="10"><rect x="0.5" y="3.5" width="6" height="5" fill="none" stroke="#000" stroke-width="1.2"/><path d="M3 3.5 V0.8 H9.2 V6 H6.5" fill="none" stroke="#000" stroke-width="1.2"/></svg>
<svg style="position:absolute;left:1904px;top:102px" width="10" height="10"><path d="M1 1 L8.5 8.5 M8.5 1 L1 8.5" stroke="#000" stroke-width="1.8"/></svg>
<div style="position:absolute;left:1671px;top:123px;width:93px;height:18px;background:#e1e1e1;border:1px solid #adadad;"></div><svg style="position:absolute;left:1753px;top:131px" width="10" height="6" viewBox="0 0 10 6"><path d="M0.8 0.6 L4.8 4.6 L8.8 0.6" fill="none" stroke="#333" stroke-width="1.1"/></svg>
<div class="t" style="left:1675px;top:126px;font-size:11px;line-height:14px;color:#000;">All</div>
<div style="position:absolute;left:1772px;top:123px;width:140px;height:18px;background:#e1e1e1;border:1px solid #adadad;"></div><svg style="position:absolute;left:1901px;top:131px" width="10" height="6" viewBox="0 0 10 6"><path d="M0.8 0.6 L4.8 4.6 L8.8 0.6" fill="none" stroke="#333" stroke-width="1.1"/></svg>
<div style="position:absolute;left:1669px;top:147px;width:249px;height:26px;background:#fff;border:1px solid #7a7a7a;box-sizing:border-box;"></div>
<div class="t" style="left:1671px;top:153px;font-size:11px;line-height:14px;color:#8a8a8a;">Filter</div>
<div style="position:absolute;left:1669px;top:174px;width:249px;height:527px;background:#fff;"></div>
<svg style="position:absolute;left:1670px;top:175px" width="16" height="12" viewBox="1670 175 16 12"><path d="M1674.6 179.6 L1678.5 183.6 L1682.4 179.6" fill="none" stroke="#3a3a3a" stroke-width="1.9"/></svg>
<div class="t" style="left:1692px;top:176px;font-size:11px;line-height:14px;color:#000;font-weight:bold;letter-spacing:0px">PROJECT</div>
<svg style="position:absolute;left:1695px;top:192px" width="8" height="12"><path d="M1.6 2.2 L5.6 6.2 L1.6 10.2" fill="none" stroke="#a6a6a6" stroke-width="1.8"/></svg>
<div class="t" style="left:1712px;top:191px;font-size:11px;line-height:14px;color:#000;font-weight:bold;letter-spacing:0px">ATTRIBUTE OVERRIDES</div>
<svg style="position:absolute;left:1695px;top:207px" width="8" height="12"><path d="M1.6 2.2 L5.6 6.2 L1.6 10.2" fill="none" stroke="#a6a6a6" stroke-width="1.8"/></svg>
<div class="t" style="left:1712px;top:206px;font-size:11px;line-height:14px;color:#000;font-weight:bold;letter-spacing:0px">CONTROL</div>
<svg style="position:absolute;left:1695px;top:222px" width="8" height="12"><path d="M1.6 2.2 L5.6 6.2 L1.6 10.2" fill="none" stroke="#a6a6a6" stroke-width="1.8"/></svg>
<div class="t" style="left:1712px;top:221px;font-size:11px;line-height:14px;color:#000;font-weight:bold;letter-spacing:0px">DATA ANALYSIS</div>
<svg style="position:absolute;left:1695px;top:237px" width="8" height="12"><path d="M1.6 2.2 L5.6 6.2 L1.6 10.2" fill="none" stroke="#a6a6a6" stroke-width="1.8"/></svg>
<div class="t" style="left:1712px;top:236px;font-size:11px;line-height:14px;color:#000;font-weight:bold;letter-spacing:0px">DEMAND DATA</div>
<svg style="position:absolute;left:1695px;top:252px" width="8" height="12"><path d="M1.6 2.2 L5.6 6.2 L1.6 10.2" fill="none" stroke="#a6a6a6" stroke-width="1.8"/></svg>
<div class="t" style="left:1712px;top:251px;font-size:11px;line-height:14px;color:#000;font-weight:bold;letter-spacing:0px">EMISSIONS</div>
<svg style="position:absolute;left:1695px;top:267px" width="8" height="12"><path d="M1.6 2.2 L5.6 6.2 L1.6 10.2" fill="none" stroke="#a6a6a6" stroke-width="1.8"/></svg>
<div class="t" style="left:1712px;top:266px;font-size:11px;line-height:14px;color:#000;font-weight:bold;letter-spacing:0px">INFRASTRUCTURE</div>
<div class="t" style="left:1712px;top:281px;font-size:11px;line-height:14px;color:#000;font-weight:bold;letter-spacing:0px">SCENARIOS</div>
<svg style="position:absolute;left:1695px;top:297px" width="8" height="12"><path d="M1.6 2.2 L5.6 6.2 L1.6 10.2" fill="none" stroke="#a6a6a6" stroke-width="1.8"/></svg>
<div class="t" style="left:1712px;top:296px;font-size:11px;line-height:14px;color:#000;font-weight:bold;letter-spacing:0px">SCRIPTS</div>
<svg style="position:absolute;left:1695px;top:312px" width="8" height="12"><path d="M1.6 2.2 L5.6 6.2 L1.6 10.2" fill="none" stroke="#a6a6a6" stroke-width="1.8"/></svg>
<div class="t" style="left:1712px;top:311px;font-size:11px;line-height:14px;color:#000;font-weight:bold;letter-spacing:0px">SUBNETWORKS</div>
<svg style="position:absolute;left:1695px;top:327px" width="8" height="12"><path d="M1.6 2.2 L5.6 6.2 L1.6 10.2" fill="none" stroke="#a6a6a6" stroke-width="1.8"/></svg>
<div class="t" style="left:1712px;top:326px;font-size:11px;line-height:14px;color:#000;font-weight:bold;letter-spacing:0px">TRAFFIC MANAGEMENT</div>
<svg style="position:absolute;left:1695px;top:342px" width="8" height="12"><path d="M1.6 2.2 L5.6 6.2 L1.6 10.2" fill="none" stroke="#a6a6a6" stroke-width="1.8"/></svg>
<div class="t" style="left:1712px;top:341px;font-size:11px;line-height:14px;color:#000;font-weight:bold;letter-spacing:0px">TRANSIT</div>
<div style="position:absolute;left:56px;top:703px;width:1864px;height:337px;background:#f5f5f5;"></div>
<svg style="position:absolute;left:61px;top:713px" width="10" height="10"><path d="M1 1 L8.5 8.5 M8.5 1 L1 8.5" stroke="#222" stroke-width="1.8"/></svg>
<svg style="position:absolute;left:62px;top:733px" width="10" height="10"><rect x="0.6" y="3.6" width="6" height="5" fill="none" stroke="#000" stroke-width="1.2"/><path d="M3 3.6 V0.8 H9.2 V6 H6.6" fill="none" stroke="#000" stroke-width="1.2"/></svg>
<div class="t" style="left:66px;top:1038px;font-size:11px;line-height:14px;color:#000;letter-spacing:0.15px;transform-origin:0 0;transform:rotate(-90deg) translate(0,-6px);">Table View (15639 objects, 0 selected)</div>
<div style="position:absolute;left:48px;top:836px;width:26px;height:200px;border:5px solid #ed1c24;z-index:50;"></div>
<div class="t" style="left:78px;top:712px;font-size:11px;line-height:14px;color:#000;">Object Type:</div>
<div style="position:absolute;left:146px;top:707px;width:447px;height:24px;background:#fff;border:1px solid #7a7a7a;border-bottom:2px solid #7a7a7a;box-sizing:border-box;"></div>
<svg style="position:absolute;left:150px;top:710px" width="20" height="18"><path d="M2 1 V17 M16 1 V17" stroke="#999" stroke-width="1"/><path d="M9 1 V17" stroke="#aaa" stroke-width="1" stroke-dasharray="2 1.5"/></svg>
<div class="t" style="left:172px;top:713px;font-size:11px;line-height:14px;color:#000;">Section</div>
<svg style="position:absolute;left:578px;top:718px" width="10" height="6" viewBox="0 0 10 6"><path d="M0.8 0.6 L4.8 4.6 L8.8 0.6" fill="none" stroke="#333" stroke-width="1.1"/></svg>
<div style="position:absolute;left:74px;top:702px;width:514px;height:25px;border:5px solid #ed1c24;z-index:50;"></div>
<div class="t" style="left:598px;top:713px;font-size:11px;line-height:14px;color:#000;">Show:</div>
<div style="position:absolute;left:634px;top:712px;width:162px;height:17px;background:#cce4f7;border:1px solid #0078d7;box-sizing:border-box;"></div>
<div class="t" style="left:637px;top:713px;font-size:11px;line-height:14px;color:#000;">All</div>
<svg style="position:absolute;left:781px;top:717px" width="10" height="6" viewBox="0 0 10 6"><path d="M0.8 0.6 L4.8 4.6 L8.8 0.6" fill="none" stroke="#333" stroke-width="1.1"/></svg>
<div class="t" style="left:801px;top:713px;font-size:11px;line-height:14px;color:#000;">Configuration:</div>
<div style="position:absolute;left:875px;top:710px;width:442px;height:19px;background:#e1e1e1;border:1px solid #adadad;"></div><svg style="position:absolute;left:1306px;top:718px" width="10" height="6" viewBox="0 0 10 6"><path d="M0.8 0.6 L4.8 4.6 L8.8 0.6" fill="none" stroke="#333" stroke-width="1.1"/></svg>
<div class="t" style="left:878px;top:713px;font-size:11px;line-height:14px;color:#000;">None</div>
<div style="position:absolute;left:1326px;top:713px;width:13px;height:12px;background:#fff;border:1px solid #333;box-sizing:border-box;"></div>
<div class="t" style="left:1343px;top:712px;font-size:11px;line-height:14px;color:#000;">Summary</div>
<div style="position:absolute;left:1847px;top:711px;width:70px;height:18px;background:#e1e1e1;border:1px solid #adadad;border-bottom:1px solid #999;box-sizing:border-box;"></div>
<div class="t" style="left:1860px;top:712px;font-size:11px;line-height:14px;color:#000;">Action</div>
<svg style="position:absolute;left:1905px;top:716px" width="8" height="5"><path d="M0 0 L7 0 L3.5 4 Z" fill="#000"/></svg>
<div style="position:absolute;left:796px;top:708px;width:520px;height:16px;border:5px solid #ed1c24;z-index:50;"></div>
<div style="position:absolute;left:1321px;top:708px;width:71px;height:16px;border:5px solid #ed1c24;z-index:50;"></div>
<div style="position:absolute;left:1842px;top:706px;width:68px;height:19px;border:5px solid #ed1c24;z-index:50;"></div>
<div style="position:absolute;left:78px;top:731px;width:1842px;height:309px;background:#fff;"></div>
<div style="position:absolute;left:78px;top:731px;width:1842px;height:1px;background:#a0a0a0;"></div>
<div style="position:absolute;left:78px;top:731px;width:1px;height:309px;background:#707784;"></div>
<div style="position:absolute;left:1919px;top:731px;width:1px;height:309px;background:#707784;"></div>
<div style="position:absolute;left:98px;top:753px;width:1804px;height:21px;background:#ffffff;"></div>
<div style="position:absolute;left:98px;top:773px;width:1804px;height:1px;background:#d9d9d9;"></div>
<div style="position:absolute;left:98px;top:774px;width:1804px;height:21px;background:#f5f5f5;"></div>
<div style="position:absolute;left:98px;top:794px;width:1804px;height:1px;background:#d9d9d9;"></div>
<div style="position:absolute;left:98px;top:795px;width:1804px;height:21px;background:#ffffff;"></div>
<div style="position:absolute;left:98px;top:815px;width:1804px;height:1px;background:#d9d9d9;"></div>
<div style="position:absolute;left:98px;top:816px;width:1804px;height:21px;background:#f5f5f5;"></div>
<div style="position:absolute;left:98px;top:836px;width:1804px;height:1px;background:#d9d9d9;"></div>
<div style="position:absolute;left:98px;top:837px;width:1804px;height:21px;background:#ffffff;"></div>
<div style="position:absolute;left:98px;top:857px;width:1804px;height:1px;background:#d9d9d9;"></div>
<div style="position:absolute;left:98px;top:858px;width:1804px;height:21px;background:#f5f5f5;"></div>
<div style="position:absolute;left:98px;top:878px;width:1804px;height:1px;background:#d9d9d9;"></div>
<div style="position:absolute;left:98px;top:879px;width:1804px;height:21px;background:#ffffff;"></div>
<div style="position:absolute;left:98px;top:899px;width:1804px;height:1px;background:#d9d9d9;"></div>
<div style="position:absolute;left:98px;top:900px;width:1804px;height:21px;background:#f5f5f5;"></div>
<div style="position:absolute;left:98px;top:920px;width:1804px;height:1px;background:#d9d9d9;"></div>
<div style="position:absolute;left:98px;top:921px;width:1804px;height:21px;background:#ffffff;"></div>
<div style="position:absolute;left:98px;top:941px;width:1804px;height:1px;background:#d9d9d9;"></div>
<div style="position:absolute;left:98px;top:942px;width:1804px;height:21px;background:#f5f5f5;"></div>
<div style="position:absolute;left:98px;top:962px;width:1804px;height:1px;background:#d9d9d9;"></div>
<div style="position:absolute;left:98px;top:963px;width:1804px;height:21px;background:#ffffff;"></div>
<div style="position:absolute;left:98px;top:983px;width:1804px;height:1px;background:#d9d9d9;"></div>
<div style="position:absolute;left:98px;top:984px;width:1804px;height:21px;background:#f5f5f5;"></div>
<div style="position:absolute;left:98px;top:1004px;width:1804px;height:1px;background:#d9d9d9;"></div>
<div style="position:absolute;left:98px;top:1005px;width:1804px;height:17px;background:#ffffff;"></div>
<div style="position:absolute;left:135px;top:732px;width:1px;height:290px;background:#d9d9d9;"></div>
<div style="position:absolute;left:285px;top:732px;width:1px;height:290px;background:#d9d9d9;"></div>
<div style="position:absolute;left:356px;top:732px;width:1px;height:290px;background:#d9d9d9;"></div>
<div style="position:absolute;left:594px;top:732px;width:1px;height:290px;background:#d9d9d9;"></div>
<div style="position:absolute;left:873px;top:732px;width:1px;height:290px;background:#d9d9d9;"></div>
<div style="position:absolute;left:983px;top:732px;width:1px;height:290px;background:#d9d9d9;"></div>
<div style="position:absolute;left:1036px;top:732px;width:1px;height:290px;background:#d9d9d9;"></div>
<div style="position:absolute;left:1126px;top:732px;width:1px;height:290px;background:#d9d9d9;"></div>
<div style="position:absolute;left:1271px;top:732px;width:1px;height:290px;background:#d9d9d9;"></div>
<div style="position:absolute;left:1328px;top:732px;width:1px;height:290px;background:#d9d9d9;"></div>
<div style="position:absolute;left:1400px;top:732px;width:1px;height:290px;background:#d9d9d9;"></div>
<div style="position:absolute;left:1689px;top:732px;width:1px;height:290px;background:#d9d9d9;"></div>
<div style="position:absolute;left:1825px;top:732px;width:1px;height:290px;background:#d9d9d9;"></div>
<div style="position:absolute;left:98px;top:737px;width:1px;height:285px;background:#d9d9d9;"></div>
<div class="t" style="left:102px;top:736px;font-size:11px;line-height:14px;color:#000;letter-spacing:-0.12px">ID</div>
<div class="t" style="left:139px;top:736px;font-size:11px;line-height:14px;color:#000;letter-spacing:-0.12px">Name</div>
<div class="t" style="left:289px;top:736px;font-size:11px;line-height:14px;color:#000;letter-spacing:-0.12px">External ID</div>
<div class="t" style="left:360px;top:736px;font-size:11px;line-height:14px;color:#000;letter-spacing:-0.12px">Additional Reaction Time At Stop (Micro)</div>
<div class="t" style="left:598px;top:736px;font-size:11px;line-height:14px;color:#000;letter-spacing:-0.12px">Additional Reaction Time At Traffic Light (Micro)</div>
<div class="t" style="left:877px;top:736px;font-size:11px;line-height:14px;color:#000;letter-spacing:-0.12px">Additional Volume</div>
<div class="t" style="left:987px;top:736px;font-size:11px;line-height:14px;color:#000;letter-spacing:-0.12px">Altitude</div>
<div class="t" style="left:1040px;top:736px;font-size:11px;line-height:14px;color:#000;letter-spacing:-0.12px">Bottom Object</div>
<div class="t" style="left:1130px;top:736px;font-size:11px;line-height:14px;color:#000;letter-spacing:-0.12px">Calculate Intermediates</div>
<div class="t" style="left:1275px;top:736px;font-size:11px;line-height:14px;color:#000;letter-spacing:-0.12px">Capacity</div>
<div class="t" style="left:1332px;top:736px;font-size:11px;line-height:14px;color:#000;letter-spacing:-0.12px">Description</div>
<div class="t" style="left:1404px;top:736px;font-size:11px;line-height:14px;color:#000;letter-spacing:-0.12px">Destination Node</div>
<div class="t" style="left:1693px;top:736px;font-size:11px;line-height:14px;color:#000;letter-spacing:-0.12px">Dynamic Cost Function</div>
<div class="t" style="left:1829px;top:736px;font-size:11px;line-height:14px;color:#000;letter-spacing:-0.12px">Final Altitude</div>
<div class="t" style="left:101px;top:757px;font-size:11px;line-height:14px;color:#000;letter-spacing:-0.12px">848</div>
<div class="t" style="left:138px;top:757px;font-size:11px;line-height:14px;color:#000;letter-spacing:-0.12px">Kalfarveien</div>
<div class="t" style="left:288px;top:757px;font-size:11px;line-height:14px;color:#000;letter-spacing:-0.12px">1231</div>
<div class="t" style="left:359px;top:757px;font-size:11px;line-height:14px;color:#000;letter-spacing:-0.12px">0</div>
<div class="t" style="left:597px;top:757px;font-size:11px;line-height:14px;color:#000;letter-spacing:-0.12px">0</div>
<div class="t" style="left:876px;top:757px;font-size:11px;line-height:14px;color:#000;letter-spacing:-0.12px">0</div>
<div class="t" style="left:986px;top:757px;font-size:11px;line-height:14px;color:#000;letter-spacing:-0.12px">0</div>
<div class="t" style="left:1039px;top:757px;font-size:11px;line-height:14px;color:#000;letter-spacing:-0.12px">None</div>
<div class="t" style="left:1129px;top:757px;font-size:11px;line-height:14px;color:#000;letter-spacing:-0.12px">True</div>
<div class="t" style="left:1274px;top:757px;font-size:11px;line-height:14px;color:#000;letter-spacing:-0.12px">900</div>
<div class="t" style="left:1403px;top:757px;font-size:11px;line-height:14px;color:#000;letter-spacing:-0.12px">173444 (5321854301)</div>
<div class="t" style="left:1692px;top:757px;font-size:11px;line-height:14px;color:#000;letter-spacing:-0.12px">Default</div>
<div class="t" style="left:1828px;top:757px;font-size:11px;line-height:14px;color:#000;letter-spacing:-0.12px">0</div>
<div class="t" style="left:101px;top:778px;font-size:11px;line-height:14px;color:#000;letter-spacing:-0.12px">850</div>
<div class="t" style="left:138px;top:778px;font-size:11px;line-height:14px;color:#000;letter-spacing:-0.12px">Kalfarveien</div>
<div class="t" style="left:288px;top:778px;font-size:11px;line-height:14px;color:#000;letter-spacing:-0.12px">1231</div>
<div class="t" style="left:359px;top:778px;font-size:11px;line-height:14px;color:#000;letter-spacing:-0.12px">0</div>
<div class="t" style="left:597px;top:778px;font-size:11px;line-height:14px;color:#000;letter-spacing:-0.12px">0</div>
<div class="t" style="left:876px;top:778px;font-size:11px;line-height:14px;color:#000;letter-spacing:-0.12px">0</div>
<div class="t" style="left:986px;top:778px;font-size:11px;line-height:14px;color:#000;letter-spacing:-0.12px">0</div>
<div class="t" style="left:1039px;top:778px;font-size:11px;line-height:14px;color:#000;letter-spacing:-0.12px">None</div>
<div class="t" style="left:1129px;top:778px;font-size:11px;line-height:14px;color:#000;letter-spacing:-0.12px">True</div>
<div class="t" style="left:1274px;top:778px;font-size:11px;line-height:14px;color:#000;letter-spacing:-0.12px">900</div>
<div class="t" style="left:1403px;top:778px;font-size:11px;line-height:14px;color:#000;letter-spacing:-0.12px">142379 (3945807402)</div>
<div class="t" style="left:1692px;top:778px;font-size:11px;line-height:14px;color:#000;letter-spacing:-0.12px">Default</div>
<div class="t" style="left:1828px;top:778px;font-size:11px;line-height:14px;color:#000;letter-spacing:-0.12px">0</div>
<div class="t" style="left:101px;top:799px;font-size:11px;line-height:14px;color:#000;letter-spacing:-0.12px">854</div>
<div class="t" style="left:138px;top:799px;font-size:11px;line-height:14px;color:#000;letter-spacing:-0.12px">Kalfarveien</div>
<div class="t" style="left:288px;top:799px;font-size:11px;line-height:14px;color:#000;letter-spacing:-0.12px">1231</div>
<div class="t" style="left:359px;top:799px;font-size:11px;line-height:14px;color:#000;letter-spacing:-0.12px">0</div>
<div class="t" style="left:597px;top:799px;font-size:11px;line-height:14px;color:#000;letter-spacing:-0.12px">0</div>
<div class="t" style="left:876px;top:799px;font-size:11px;line-height:14px;color:#000;letter-spacing:-0.12px">0</div>
<div class="t" style="left:986px;top:799px;font-size:11px;line-height:14px;color:#000;letter-spacing:-0.12px">0</div>
<div class="t" style="left:1039px;top:799px;font-size:11px;line-height:14px;color:#000;letter-spacing:-0.12px">None</div>
<div class="t" style="left:1129px;top:799px;font-size:11px;line-height:14px;color:#000;letter-spacing:-0.12px">True</div>
<div class="t" style="left:1274px;top:799px;font-size:11px;line-height:14px;color:#000;letter-spacing:-0.12px">900</div>
<div class="t" style="left:1403px;top:799px;font-size:11px;line-height:14px;color:#000;letter-spacing:-0.12px">173444 (5321854301)</div>
<div class="t" style="left:1692px;top:799px;font-size:11px;line-height:14px;color:#000;letter-spacing:-0.12px">Default</div>
<div class="t" style="left:1828px;top:799px;font-size:11px;line-height:14px;color:#000;letter-spacing:-0.12px">0</div>
<div class="t" style="left:101px;top:820px;font-size:11px;line-height:14px;color:#000;letter-spacing:-0.12px">855</div>
<div class="t" style="left:138px;top:820px;font-size:11px;line-height:14px;color:#000;letter-spacing:-0.12px">&#197;rstadveien</div>
<div class="t" style="left:288px;top:820px;font-size:11px;line-height:14px;color:#000;letter-spacing:-0.12px">1261</div>
<div class="t" style="left:359px;top:820px;font-size:11px;line-height:14px;color:#000;letter-spacing:-0.12px">0</div>
<div class="t" style="left:597px;top:820px;font-size:11px;line-height:14px;color:#000;letter-spacing:-0.12px">0</div>
<div class="t" style="left:876px;top:820px;font-size:11px;line-height:14px;color:#000;letter-spacing:-0.12px">0</div>
<div class="t" style="left:986px;top:820px;font-size:11px;line-height:14px;color:#000;letter-spacing:-0.12px">0</div>
<div class="t" style="left:1039px;top:820px;font-size:11px;line-height:14px;color:#000;letter-spacing:-0.12px">None</div>
<div class="t" style="left:1129px;top:820px;font-size:11px;line-height:14px;color:#000;letter-spacing:-0.12px">True</div>
<div class="t" style="left:1274px;top:820px;font-size:11px;line-height:14px;color:#000;letter-spacing:-0.12px">900</div>
<div class="t" style="left:1403px;top:820px;font-size:11px;line-height:14px;color:#000;letter-spacing:-0.12px">194916</div>
<div class="t" style="left:1692px;top:820px;font-size:11px;line-height:14px;color:#000;letter-spacing:-0.12px">Default</div>
<div class="t" style="left:1828px;top:820px;font-size:11px;line-height:14px;color:#000;letter-spacing:-0.12px">0</div>
<div class="t" style="left:101px;top:841px;font-size:11px;line-height:14px;color:#000;letter-spacing:-0.12px">856</div>
<div class="t" style="left:138px;top:841px;font-size:11px;line-height:14px;color:#000;letter-spacing:-0.12px">&#197;rstadveien</div>
<div class="t" style="left:288px;top:841px;font-size:11px;line-height:14px;color:#000;letter-spacing:-0.12px">1261</div>
<div class="t" style="left:359px;top:841px;font-size:11px;line-height:14px;color:#000;letter-spacing:-0.12px">0</div>
<div class="t" style="left:597px;top:841px;font-size:11px;line-height:14px;color:#000;letter-spacing:-0.12px">0</div>
<div class="t" style="left:876px;top:841px;font-size:11px;line-height:14px;color:#000;letter-spacing:-0.12px">0</div>
<div class="t" style="left:986px;top:841px;font-size:11px;line-height:14px;color:#000;letter-spacing:-0.12px">0</div>
<div class="t" style="left:1039px;top:841px;font-size:11px;line-height:14px;color:#000;letter-spacing:-0.12px">None</div>
<div class="t" style="left:1129px;top:841px;font-size:11px;line-height:14px;color:#000;letter-spacing:-0.12px">True</div>
<div class="t" style="left:1274px;top:841px;font-size:11px;line-height:14px;color:#000;letter-spacing:-0.12px">1800</div>
<div class="t" style="left:1403px;top:841px;font-size:11px;line-height:14px;color:#000;letter-spacing:-0.12px">211358</div>
<div class="t" style="left:1692px;top:841px;font-size:11px;line-height:14px;color:#000;letter-spacing:-0.12px">Default</div>
<div class="t" style="left:1828px;top:841px;font-size:11px;line-height:14px;color:#000;letter-spacing:-0.12px">0</div>
<div class="t" style="left:101px;top:862px;font-size:11px;line-height:14px;color:#000;letter-spacing:-0.12px">857</div>
<div class="t" style="left:138px;top:862px;font-size:11px;line-height:14px;color:#000;letter-spacing:-0.12px">Haukelandsveien</div>
<div class="t" style="left:288px;top:862px;font-size:11px;line-height:14px;color:#000;letter-spacing:-0.12px">1262</div>
<div class="t" style="left:359px;top:862px;font-size:11px;line-height:14px;color:#000;letter-spacing:-0.12px">0</div>
<div class="t" style="left:597px;top:862px;font-size:11px;line-height:14px;color:#000;letter-spacing:-0.12px">0</div>
<div class="t" style="left:876px;top:862px;font-size:11px;line-height:14px;color:#000;letter-spacing:-0.12px">0</div>
<div class="t" style="left:986px;top:862px;font-size:11px;line-height:14px;color:#000;letter-spacing:-0.12px">0</div>
<div class="t" style="left:1039px;top:862px;font-size:11px;line-height:14px;color:#000;letter-spacing:-0.12px">None</div>
<div class="t" style="left:1129px;top:862px;font-size:11px;line-height:14px;color:#000;letter-spacing:-0.12px">True</div>
<div class="t" style="left:1274px;top:862px;font-size:11px;line-height:14px;color:#000;letter-spacing:-0.12px">3400</div>
<div class="t" style="left:1403px;top:862px;font-size:11px;line-height:14px;color:#000;letter-spacing:-0.12px">7324481: Merged Node from Nodes 7324453 and 195003</div>
<div class="t" style="left:1692px;top:862px;font-size:11px;line-height:14px;color:#000;letter-spacing:-0.12px">Default</div>
<div class="t" style="left:1828px;top:862px;font-size:11px;line-height:14px;color:#000;letter-spacing:-0.12px">0</div>
<div class="t" style="left:101px;top:883px;font-size:11px;line-height:14px;color:#000;letter-spacing:-0.12px">863</div>
<div class="t" style="left:138px;top:883px;font-size:11px;line-height:14px;color:#000;letter-spacing:-0.12px">Kanalveien</div>
<div class="t" style="left:288px;top:883px;font-size:11px;line-height:14px;color:#000;letter-spacing:-0.12px">2514604</div>
<div class="t" style="left:359px;top:883px;font-size:11px;line-height:14px;color:#000;letter-spacing:-0.12px">0</div>
<div class="t" style="left:597px;top:883px;font-size:11px;line-height:14px;color:#000;letter-spacing:-0.12px">0</div>
<div class="t" style="left:876px;top:883px;font-size:11px;line-height:14px;color:#000;letter-spacing:-0.12px">0</div>
<div class="t" style="left:986px;top:883px;font-size:11px;line-height:14px;color:#000;letter-spacing:-0.12px">0</div>
<div class="t" style="left:1039px;top:883px;font-size:11px;line-height:14px;color:#000;letter-spacing:-0.12px">None</div>
<div class="t" style="left:1129px;top:883px;font-size:11px;line-height:14px;color:#000;letter-spacing:-0.12px">True</div>
<div class="t" style="left:1274px;top:883px;font-size:11px;line-height:14px;color:#000;letter-spacing:-0.12px">800</div>
<div class="t" style="left:1403px;top:883px;font-size:11px;line-height:14px;color:#000;letter-spacing:-0.12px">91606 (61271038)</div>
<div class="t" style="left:1692px;top:883px;font-size:11px;line-height:14px;color:#000;letter-spacing:-0.12px">Default</div>
<div class="t" style="left:1828px;top:883px;font-size:11px;line-height:14px;color:#000;letter-spacing:-0.12px">0</div>
<div class="t" style="left:101px;top:904px;font-size:11px;line-height:14px;color:#000;letter-spacing:-0.12px">866</div>
<div class="t" style="left:138px;top:904px;font-size:11px;line-height:14px;color:#000;letter-spacing:-0.12px">Kanalveien</div>
<div class="t" style="left:288px;top:904px;font-size:11px;line-height:14px;color:#000;letter-spacing:-0.12px">2514604</div>
<div class="t" style="left:359px;top:904px;font-size:11px;line-height:14px;color:#000;letter-spacing:-0.12px">0</div>
<div class="t" style="left:597px;top:904px;font-size:11px;line-height:14px;color:#000;letter-spacing:-0.12px">0</div>
<div class="t" style="left:876px;top:904px;font-size:11px;line-height:14px;color:#000;letter-spacing:-0.12px">0</div>
<div class="t" style="left:986px;top:904px;font-size:11px;line-height:14px;color:#000;letter-spacing:-0.12px">0</div>
<div class="t" style="left:1039px;top:904px;font-size:11px;line-height:14px;color:#000;letter-spacing:-0.12px">None</div>
<div class="t" style="left:1129px;top:904px;font-size:11px;line-height:14px;color:#000;letter-spacing:-0.12px">True</div>
<div class="t" style="left:1274px;top:904px;font-size:11px;line-height:14px;color:#000;letter-spacing:-0.12px">1500</div>
<div class="t" style="left:1403px;top:904px;font-size:11px;line-height:14px;color:#000;letter-spacing:-0.12px">181944</div>
<div class="t" style="left:1692px;top:904px;font-size:11px;line-height:14px;color:#000;letter-spacing:-0.12px">Default</div>
<div class="t" style="left:1828px;top:904px;font-size:11px;line-height:14px;color:#000;letter-spacing:-0.12px">0</div>
<div class="t" style="left:101px;top:925px;font-size:11px;line-height:14px;color:#000;letter-spacing:-0.12px">867</div>
<div class="t" style="left:138px;top:925px;font-size:11px;line-height:14px;color:#000;letter-spacing:-0.12px">Kanalveien</div>
<div class="t" style="left:288px;top:925px;font-size:11px;line-height:14px;color:#000;letter-spacing:-0.12px">2514604</div>
<div class="t" style="left:359px;top:925px;font-size:11px;line-height:14px;color:#000;letter-spacing:-0.12px">0</div>
<div class="t" style="left:597px;top:925px;font-size:11px;line-height:14px;color:#000;letter-spacing:-0.12px">0</div>
<div class="t" style="left:876px;top:925px;font-size:11px;line-height:14px;color:#000;letter-spacing:-0.12px">0</div>
<div class="t" style="left:986px;top:925px;font-size:11px;line-height:14px;color:#000;letter-spacing:-0.12px">0</div>
<div class="t" style="left:1039px;top:925px;font-size:11px;line-height:14px;color:#000;letter-spacing:-0.12px">None</div>
<div class="t" style="left:1129px;top:925px;font-size:11px;line-height:14px;color:#000;letter-spacing:-0.12px">True</div>
<div class="t" style="left:1274px;top:925px;font-size:11px;line-height:14px;color:#000;letter-spacing:-0.12px">800</div>
<div class="t" style="left:1403px;top:925px;font-size:11px;line-height:14px;color:#000;letter-spacing:-0.12px">91606 (61271038)</div>
<div class="t" style="left:1692px;top:925px;font-size:11px;line-height:14px;color:#000;letter-spacing:-0.12px">Default</div>
<div class="t" style="left:1828px;top:925px;font-size:11px;line-height:14px;color:#000;letter-spacing:-0.12px">0</div>
<div class="t" style="left:101px;top:946px;font-size:11px;line-height:14px;color:#000;letter-spacing:-0.12px">868</div>
<div class="t" style="left:138px;top:946px;font-size:11px;line-height:14px;color:#000;letter-spacing:-0.12px">Kanalveien</div>
<div class="t" style="left:288px;top:946px;font-size:11px;line-height:14px;color:#000;letter-spacing:-0.12px">2514604</div>
<div class="t" style="left:359px;top:946px;font-size:11px;line-height:14px;color:#000;letter-spacing:-0.12px">0</div>
<div class="t" style="left:597px;top:946px;font-size:11px;line-height:14px;color:#000;letter-spacing:-0.12px">0</div>
<div class="t" style="left:876px;top:946px;font-size:11px;line-height:14px;color:#000;letter-spacing:-0.12px">0</div>
<div class="t" style="left:986px;top:946px;font-size:11px;line-height:14px;color:#000;letter-spacing:-0.12px">0</div>
<div class="t" style="left:1039px;top:946px;font-size:11px;line-height:14px;color:#000;letter-spacing:-0.12px">None</div>
<div class="t" style="left:1129px;top:946px;font-size:11px;line-height:14px;color:#000;letter-spacing:-0.12px">True</div>
<div class="t" style="left:1274px;top:946px;font-size:11px;line-height:14px;color:#000;letter-spacing:-0.12px">800</div>
<div class="t" style="left:1403px;top:946px;font-size:11px;line-height:14px;color:#000;letter-spacing:-0.12px">77096 (11002397)</div>
<div class="t" style="left:1692px;top:946px;font-size:11px;line-height:14px;color:#000;letter-spacing:-0.12px">Default</div>
<div class="t" style="left:1828px;top:946px;font-size:11px;line-height:14px;color:#000;letter-spacing:-0.12px">0</div>
<div class="t" style="left:101px;top:967px;font-size:11px;line-height:14px;color:#000;letter-spacing:-0.12px">870</div>
<div class="t" style="left:138px;top:967px;font-size:11px;line-height:14px;color:#000;letter-spacing:-0.12px">Kanalveien</div>
<div class="t" style="left:288px;top:967px;font-size:11px;line-height:14px;color:#000;letter-spacing:-0.12px">2514606</div>
<div class="t" style="left:359px;top:967px;font-size:11px;line-height:14px;color:#000;letter-spacing:-0.12px">0</div>
<div class="t" style="left:597px;top:967px;font-size:11px;line-height:14px;color:#000;letter-spacing:-0.12px">0</div>
<div class="t" style="left:876px;top:967px;font-size:11px;line-height:14px;color:#000;letter-spacing:-0.12px">0</div>
<div class="t" style="left:986px;top:967px;font-size:11px;line-height:14px;color:#000;letter-spacing:-0.12px">0</div>
<div class="t" style="left:1039px;top:967px;font-size:11px;line-height:14px;color:#000;letter-spacing:-0.12px">None</div>
<div class="t" style="left:1129px;top:967px;font-size:11px;line-height:14px;color:#000;letter-spacing:-0.12px">True</div>
<div class="t" style="left:1274px;top:967px;font-size:11px;line-height:14px;color:#000;letter-spacing:-0.12px">1500</div>
<div class="t" style="left:1403px;top:967px;font-size:11px;line-height:14px;color:#000;letter-spacing:-0.12px">181944</div>
<div class="t" style="left:1692px;top:967px;font-size:11px;line-height:14px;color:#000;letter-spacing:-0.12px">Default</div>
<div class="t" style="left:1828px;top:967px;font-size:11px;line-height:14px;color:#000;letter-spacing:-0.12px">0</div>
<div class="t" style="left:101px;top:988px;font-size:11px;line-height:14px;color:#000;letter-spacing:-0.12px">875</div>
<div class="t" style="left:288px;top:988px;font-size:11px;line-height:14px;color:#000;letter-spacing:-0.12px">2515144</div>
<div class="t" style="left:359px;top:988px;font-size:11px;line-height:14px;color:#000;letter-spacing:-0.12px">0</div>
<div class="t" style="left:597px;top:988px;font-size:11px;line-height:14px;color:#000;letter-spacing:-0.12px">0</div>
<div class="t" style="left:876px;top:988px;font-size:11px;line-height:14px;color:#000;letter-spacing:-0.12px">0</div>
<div class="t" style="left:986px;top:988px;font-size:11px;line-height:14px;color:#000;letter-spacing:-0.12px">0</div>
<div class="t" style="left:1039px;top:988px;font-size:11px;line-height:14px;color:#000;letter-spacing:-0.12px">None</div>
<div class="t" style="left:1129px;top:988px;font-size:11px;line-height:14px;color:#000;letter-spacing:-0.12px">True</div>
<div class="t" style="left:1274px;top:988px;font-size:11px;line-height:14px;color:#000;letter-spacing:-0.12px">2000</div>
<div class="t" style="left:1403px;top:988px;font-size:11px;line-height:14px;color:#000;letter-spacing:-0.12px">7324650</div>
<div class="t" style="left:1692px;top:988px;font-size:11px;line-height:14px;color:#000;letter-spacing:-0.12px">Default</div>
<div class="t" style="left:1828px;top:988px;font-size:11px;line-height:14px;color:#000;letter-spacing:-0.12px">0</div>
<div class="t" style="left:101px;top:1009px;font-size:11px;line-height:14px;color:#000;letter-spacing:-0.12px">876</div>
<div class="t" style="left:288px;top:1009px;font-size:11px;line-height:14px;color:#000;letter-spacing:-0.12px">2515148</div>
<div class="t" style="left:359px;top:1009px;font-size:11px;line-height:14px;color:#000;letter-spacing:-0.12px">0</div>
<div class="t" style="left:597px;top:1009px;font-size:11px;line-height:14px;color:#000;letter-spacing:-0.12px">0</div>
<div class="t" style="left:876px;top:1009px;font-size:11px;line-height:14px;color:#000;letter-spacing:-0.12px">0</div>
<div class="t" style="left:986px;top:1009px;font-size:11px;line-height:14px;color:#000;letter-spacing:-0.12px">0</div>
<div class="t" style="left:1039px;top:1009px;font-size:11px;line-height:14px;color:#000;letter-spacing:-0.12px">None</div>
<div class="t" style="left:1129px;top:1009px;font-size:11px;line-height:14px;color:#000;letter-spacing:-0.12px">True</div>
<div class="t" style="left:1274px;top:1009px;font-size:11px;line-height:14px;color:#000;letter-spacing:-0.12px">1800</div>
<div class="t" style="left:1403px;top:1009px;font-size:11px;line-height:14px;color:#000;letter-spacing:-0.12px">76895 (10999683)</div>
<div class="t" style="left:1692px;top:1009px;font-size:11px;line-height:14px;color:#000;letter-spacing:-0.12px">Default</div>
<div class="t" style="left:1828px;top:1009px;font-size:11px;line-height:14px;color:#000;letter-spacing:-0.12px">0</div>
<div style="position:absolute;left:1902px;top:732px;width:17px;height:290px;background:#f0f0f0;"></div>
<svg style="position:absolute;left:1906px;top:737px" width="10" height="7"><path d="M1.2 5.8 L5 2 L8.8 5.8" fill="none" stroke="#444" stroke-width="2.2"/></svg>
<div style="position:absolute;left:1903px;top:750px;width:16px;height:17px;background:#cdcdcd;"></div>
<svg style="position:absolute;left:1906px;top:1010px" width="10" height="7"><path d="M1.2 1.2 L5 5 L8.8 1.2" fill="none" stroke="#444" stroke-width="2.2"/></svg>
<div style="position:absolute;left:79px;top:1022px;width:1823px;height:17px;background:#f0f0f0;"></div>
<svg style="position:absolute;left:84px;top:1026px" width="7" height="10"><path d="M5.8 1.2 L2 5 L5.8 8.8" fill="none" stroke="#444" stroke-width="2.2"/></svg>
<div style="position:absolute;left:96px;top:1023px;width:290px;height:15px;background:#cdcdcd;"></div>
<svg style="position:absolute;left:1891px;top:1026px" width="7" height="10"><path d="M1.2 1.2 L5 5 L1.2 8.8" fill="none" stroke="#444" stroke-width="2.2"/></svg>
<div style="position:absolute;left:1902px;top:1022px;width:17px;height:17px;background:#f6f6f6;"></div>
<div style="position:absolute;left:78px;top:1039px;width:1842px;height:1px;background:#707784;"></div>
<div style="position:absolute;left:634px;top:728px;width:162px;height:80px;background:#fff;border:1px solid #767676;box-sizing:border-box;z-index:40;"></div>
<div style="position:absolute;left:635px;top:729px;width:160px;height:13px;background:#0078d7;outline:1px dotted #f0a030;outline-offset:-1px;z-index:41;"></div>
<div class="t" style="left:636px;top:728.5px;font-size:11px;line-height:14px;color:#fff;letter-spacing:-0.12px;z-index:42;">All</div>
<div class="t" style="left:636px;top:741.5px;font-size:11px;line-height:14px;color:#000;letter-spacing:-0.12px;z-index:42;">Selected in View</div>
<div class="t" style="left:636px;top:754.5px;font-size:11px;line-height:14px;color:#000;letter-spacing:-0.12px;z-index:42;">Visible</div>
<div class="t" style="left:636px;top:767.5px;font-size:11px;line-height:14px;color:#000;letter-spacing:-0.12px;z-index:42;">Filtered</div>
<div class="t" style="left:636px;top:780.5px;font-size:11px;line-height:14px;color:#000;letter-spacing:-0.12px;z-index:42;">Filtered and Selected in View</div>
<div class="t" style="left:636px;top:793.5px;font-size:11px;line-height:14px;color:#000;letter-spacing:-0.12px;z-index:42;">Filtered and Visible</div>
<div style="position:absolute;left:629px;top:707px;width:162px;height:96px;border:5px solid #ed1c24;z-index:50;"></div>
</body></html>
